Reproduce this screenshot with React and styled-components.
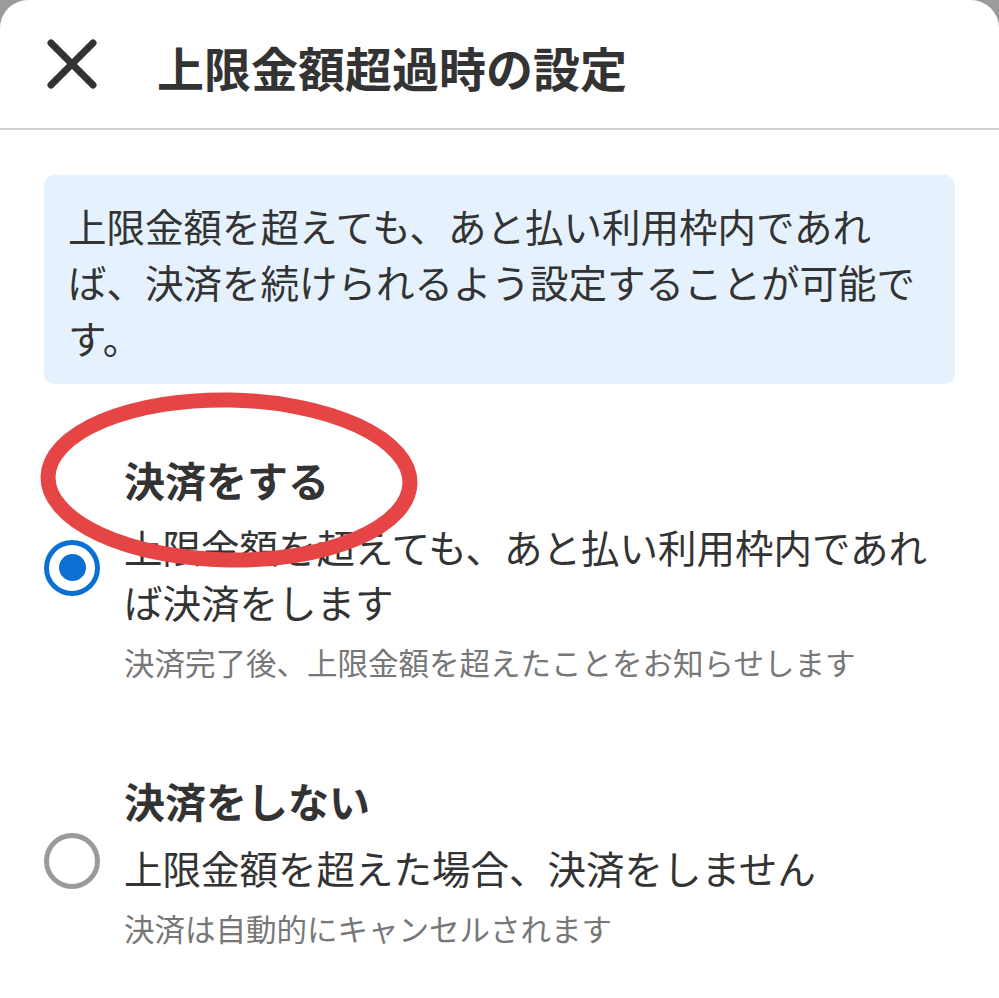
import React from 'react';
import styled, { createGlobalStyle } from 'styled-components';

const Global = createGlobalStyle`
    html, body {
        margin: 0;
        padding: 0;
        background: #9b9b9b;
    }
    body {
        font-family: "Noto Sans CJK JP", "Noto Sans", sans-serif;
        color: #333;
    }
`

const Sheet = styled.div`
    position: relative;
    background: #fff;
    border-radius: 28px 28px 0 0;
    min-height: 998px;
    overflow: hidden;
`

const Header = styled.div`
    display: flex;
    align-items: center;
    gap: 60px;
    height: 128px;
    padding-left: 47px;
    border-bottom: 2px solid #d2d2d2;
`

const Title = styled.h1`
    margin: 0;
    font-size: 47px;
    font-weight: 700;
    line-height: 1;
    color: #333;
    padding-top: 5px;
`

const Body = styled.div`
    padding: 45px 44px 0;
`

const Notice = styled.div`
    background: #e5f2fe;
    border-radius: 10px;
    padding: 22px 26px 19px 24px;
    font-size: 38.5px;
    line-height: 56px;
    color: #333;
`

const Options = styled.div`
    display: flex;
    flex-direction: column;
    gap: 88px;
    margin-top: 67px;
`

const Option = styled.label`
    display: flex;
    align-items: center;
    gap: 24px;
`

const Radio = styled.span`
    flex: none;
    width: 56px;
    height: 56px;
    box-sizing: border-box;
    border-radius: 50%;
    border: 5px solid ${p => p.checked ? '#0b6fd4' : '#9a9a9a'};
    display: flex;
    align-items: center;
    justify-content: center;
    &::after {
        content: '';
        width: 27px;
        height: 27px;
        border-radius: 50%;
        background: ${p => p.checked ? '#0b6fd4' : 'transparent'};
    }
`

const Texts = styled.div`
    display: flex;
    flex-direction: column;
`

const OptTitle = styled.div`
    font-size: 41px;
    font-weight: 700;
    line-height: 56px;
    color: #333;
`

const OptDesc = styled.div`
    margin-top: 12px;
    font-size: 38.5px;
    line-height: 55px;
    color: #333;
`

const OptNote = styled.div`
    margin-top: 11px;
    font-size: 30.5px;
    line-height: 44px;
    color: #777;
`

const Mark = styled.svg`
    position: absolute;
    left: 30px;
    top: 385px;
    pointer-events: none;
`

const CloseIcon = () => (
    <svg width="50" height="50" viewBox="0 0 50 50">
        <path d="M4 4 L46 46 M46 4 L4 46" stroke="#333" strokeWidth="7" strokeLinecap="round" fill="none" />
    </svg>
)

const options = [
    {
        title: '決済をする',
        desc: '上限金額を超えても、あと払い利用枠内であれば決済をします',
        note: '決済完了後、上限金額を超えたことをお知らせします',
        checked: true,
    },
    {
        title: '決済をしない',
        desc: '上限金額を超えた場合、決済をしません',
        note: '決済は自動的にキャンセルされます',
        checked: false,
    },
]

const App = () => (
    <Sheet>
        <Global />
        <Header>
            <CloseIcon />
            <Title>上限金額超過時の設定</Title>
        </Header>
        <Body>
            <Notice>
                上限金額を超えても、あと払い利用枠内であれば、決済を続けられるよう設定することが可能です。
            </Notice>
            <Options>
                {options.map(o => (
                    <Option key={o.title}>
                        <Radio checked={o.checked} />
                        <Texts>
                            <OptTitle>{o.title}</OptTitle>
                            <OptDesc>{o.desc}</OptDesc>
                            <OptNote>{o.note}</OptNote>
                        </Texts>
                    </Option>
                ))}
            </Options>
        </Body>
        <Mark width="400" height="195" viewBox="0 0 400 195">
            <ellipse cx="199" cy="95" rx="181" ry="80" fill="none" stroke="#e64545" strokeWidth="15" transform="rotate(1 199 95)" />
        </Mark>
    </Sheet>
)

export default App;
